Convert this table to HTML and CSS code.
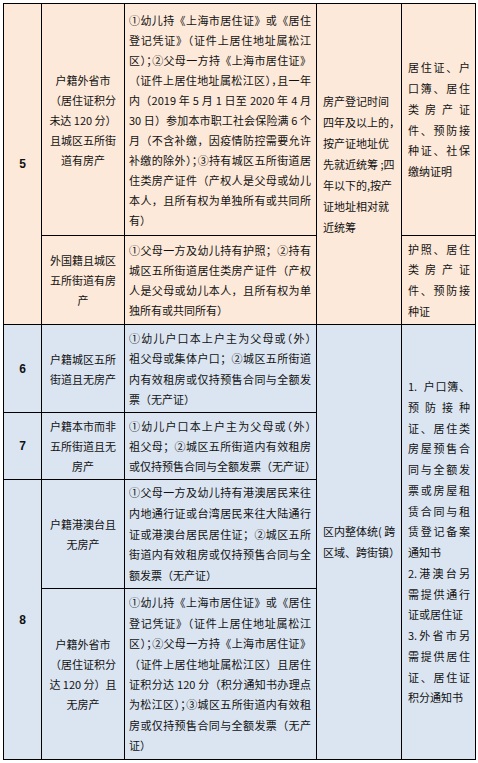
FILE: index.html
```html
<!DOCTYPE html>
<html lang="zh-CN">
<head>
<meta charset="utf-8">
<title>入园统筹表</title>
<link rel="stylesheet" href="styles.css">
</head>
<body>
<div class="tbl">
  <!-- Row 5 -->
  <div class="cell num pe x1 y12">5</div>
  <div class="cell nm pe x2 y1">
    <div>户籍外省市</div><div>（居住证积分</div><div>未达 120 分）</div><div>且城区五所街</div><div>道有房产</div>
  </div>
  <div class="cell rq pe x3 y1">
    <div class="ln">①幼儿持《上海市居住证》或《居住</div>
    <div class="ln">登记凭证》（证件上居住地址属松江</div>
    <div class="ln">区<span class="hw">）；</span>②父母一方持《上海市居住证》</div>
    <div class="ln">（证件上居住地址属松江区<span class="hw">），</span>且一年</div>
    <div class="ln">内（2019 年 5 月 1 日至 2020 年 4 月</div>
    <div class="ln">30 日）参加本市职工社会保险满 6 个</div>
    <div class="ln">月（不含补缴，因疫情防控需要允许</div>
    <div class="ln">补缴的除外<span class="hw">）；</span>③持有城区五所街道居</div>
    <div class="ln">住类房产证件（产权人是父母或幼儿</div>
    <div class="ln">本人，且所有权为单独所有或共同所</div>
    <div class="ln end">有）</div>
  </div>
  <div class="cell pl pe x4 y12">
    <div>房产登记时间</div><div>四年及以上的，</div><div>按产证地址优</div><div>先就近统筹 ;四</div><div>年以下的,按产</div><div>证地址相对就</div><div>近统筹</div>
  </div>
  <div class="cell dc pe x5 y1">
    <div class="ln">居住证、户</div>
    <div class="ln">口簿、居住</div>
    <div class="ln">类房产证</div>
    <div class="ln">件、预防接</div>
    <div class="ln">种证、社保</div>
    <div class="ln end">缴纳证明</div>
  </div>
  <div class="cell nm pe x2 y2">
    <div>外国籍且城区</div><div>五所街道有房</div><div>产</div>
  </div>
  <div class="cell rq pe x3 y2">
    <div class="ln">①父母一方及幼儿持有护照；②持有</div>
    <div class="ln">城区五所街道居住类房产证件（产权</div>
    <div class="ln">人是父母或幼儿本人，且所有权为单</div>
    <div class="ln end">独所有或共同所有）</div>
  </div>
  <div class="cell dc pe x5 y2">
    <div class="ln">护照、居住</div>
    <div class="ln">类房产证</div>
    <div class="ln">件、预防接</div>
    <div class="ln end">种证</div>
  </div>

  <!-- Row 6 -->
  <div class="cell num bl x1 y3">6</div>
  <div class="cell nm bl x2 y3">
    <div>户籍城区五所</div><div>街道且无房产</div>
  </div>
  <div class="cell rq lh bl x3 y3">
    <div class="ln">①幼儿户口本上户主为父母或<span class="hw">（</span>外<span class="hw">）</span></div>
    <div class="ln">祖父母或集体户口；②城区五所街道</div>
    <div class="ln">内有效租房或仅持预售合同与全额发</div>
    <div class="ln end">票（无产证）</div>
  </div>
  <div class="cell pl bl x4 y36">
    <div>区内整体统( 跨</div><div>区域、跨街镇）</div>
  </div>
  <div class="cell dc bl x5 y36">
    <div class="ln">1.&nbsp;&nbsp;户口簿、</div>
    <div class="ln">预防接种</div>
    <div class="ln">证、居住类</div>
    <div class="ln">房屋预售合</div>
    <div class="ln">同与全额发</div>
    <div class="ln">票或房屋租</div>
    <div class="ln">赁合同与租</div>
    <div class="ln">赁登记备案</div>
    <div class="ln end">通知书</div>
    <div class="ln">2.港澳台另</div>
    <div class="ln">需提供通行</div>
    <div class="ln end">证或居住证</div>
    <div class="ln">3.外省市另</div>
    <div class="ln">需提供居住</div>
    <div class="ln">证、居住证</div>
    <div class="ln end">积分通知书</div>
  </div>

  <!-- Row 7 -->
  <div class="cell num bl x1 y4">7</div>
  <div class="cell nm bl x2 y4">
    <div>户籍本市而非</div><div>五所街道且无</div><div>房产</div>
  </div>
  <div class="cell rq bl x3 y4">
    <div class="ln">①幼儿户口本上户主为父母或<span class="hw">（</span>外<span class="hw">）</span></div>
    <div class="ln">祖父母；②城区五所街道内有效租房</div>
    <div class="ln">或仅持预售合同与全额发票（无产证）</div>
  </div>

  <!-- Row 8 -->
  <div class="cell num bl x1 y56">8</div>
  <div class="cell nm bl x2 y5">
    <div>户籍港澳台且</div><div>无房产</div>
  </div>
  <div class="cell rq lh2 bl x3 y5">
    <div class="ln">①父母一方及幼儿持有港澳居民来往</div>
    <div class="ln">内地通行证或台湾居民来往大陆通行</div>
    <div class="ln">证或港澳台居民居住证；②城区五所</div>
    <div class="ln">街道内有效租房或仅持预售合同与全</div>
    <div class="ln end">额发票（无产证）</div>
  </div>
  <div class="cell nm bl x2 y6">
    <div>户籍外省市</div><div>（居住证积分</div><div>达 120 分）且</div><div>无房产</div>
  </div>
  <div class="cell rq lh bl x3 y6">
    <div class="ln">①幼儿持《上海市居住证》或《居住</div>
    <div class="ln">登记凭证》（证件上居住地址属松江</div>
    <div class="ln">区<span class="hw">）；</span>②父母一方持《上海市居住证》</div>
    <div class="ln">（证件上居住地址属松江区）且居住</div>
    <div class="ln">证积分达 120 分（积分通知书办理点</div>
    <div class="ln">为松江区<span class="hw">）；</span>③城区五所街道内有效租</div>
    <div class="ln">房或仅持预售合同与全额发票（无产</div>
    <div class="ln end">证）</div>
  </div>
</div>
</body>
</html>
```

FILE: styles.css
```css
html, body {
  margin: 0;
  padding: 0;
  background: #ffffff;
}

.tbl {
  display: grid;
  grid-template-columns: 37px 82px 191px 84px 73px;
  grid-template-rows: 231px 88px 87px 66px 108px 170px;
  gap: 1px;
  padding: 1px;
  background: #000000;
  width: max-content;
  margin: 3px 0 0 3px;
  font-family: "Noto Sans CJK SC", "Noto Sans", sans-serif;
  font-size: 11px;
  color: #111111;
}

.cell {
  display: flex;
  flex-direction: column;
  justify-content: center;
  min-width: 0;
  overflow: hidden;
}

.pe { background: #fde9d9; }
.bl { background: #dbe5f1; }

.x1 { grid-column: 1; }
.x2 { grid-column: 2; }
.x3 { grid-column: 3; }
.x4 { grid-column: 4; }
.x5 { grid-column: 5; }

.y1 { grid-row: 1; }
.y2 { grid-row: 2; }
.y3 { grid-row: 3; }
.y4 { grid-row: 4; }
.y5 { grid-row: 5; }
.y6 { grid-row: 6; }
.y12 { grid-row: 1 / 3; }
.y36 { grid-row: 3 / 7; }
.y56 { grid-row: 5 / 7; }

.num {
  align-items: center;
  font-family: "Liberation Sans", Arial, sans-serif;
  font-weight: bold;
  font-size: 12px;
}

.nm {
  text-align: center;
  line-height: 20px;
  padding: 0 2px;
}

.rq {
  padding: 0 5px 0 4px;
  line-height: 20px;
}

.rq.lh { line-height: 20.4px; }
.rq.lh2 { line-height: 20.8px; }

.pl {
  padding: 0 3px 0 6px;
  line-height: 21px;
  white-space: nowrap;
}

.dc {
  padding: 0 5px 0 6px;
  line-height: 20.75px;
}

.ln {
  text-align: justify;
  text-align-last: justify;
}

.ln.end {
  text-align-last: left;
}

.hw {
  font-feature-settings: "halt";
}
```
